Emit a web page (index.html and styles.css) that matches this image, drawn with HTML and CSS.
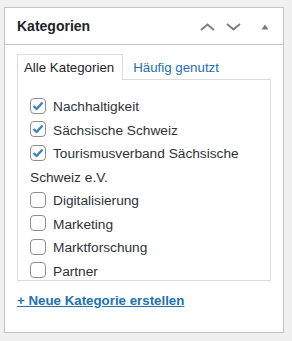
FILE: index.html
```html
<!DOCTYPE html>
<html lang="de">
<head>
    <meta charset="UTF-8">
    <meta name="viewport" content="width=device-width, initial-scale=1.0">
    <title>Kategorien</title>
    <link rel="stylesheet" href="styles.css">
</head>
<body>
    <div class="postbox">
        <div class="postbox-header">
            <h2>Kategorien</h2>
            <div class="handle-actions">
                <svg class="arrow" width="15" height="8" viewBox="0 0 15 8"><polyline points="1,7 7.5,1.5 14,7" fill="none" stroke="#787c82" stroke-width="1.8"/></svg>
                <svg class="arrow" width="15" height="8" viewBox="0 0 15 8"><polyline points="1,1 7.5,6.5 14,1" fill="none" stroke="#787c82" stroke-width="1.8"/></svg>
                <svg class="toggle" width="8" height="6" viewBox="0 0 8 6"><polygon points="0.5,5.5 4,0.5 7.5,5.5" fill="#787c82"/></svg>
            </div>
        </div>

        <div class="inside">
            <ul class="tabs">
                <li class="tab active">Alle Kategorien</li>
                <li class="tab"><a href="#">Häufig genutzt</a></li>
            </ul>

            <div class="tabs-panel">
                <ul class="checklist">
                    <li><label><span class="box checked"><svg width="12" height="10" viewBox="0 0 12 10"><polyline points="1.5,5 4.6,8 10.5,1.5" fill="none" stroke="#3582c4" stroke-width="2.3" stroke-linejoin="round"/></svg></span>Nachhaltigkeit</label></li>
                    <li><label><span class="box checked"><svg width="12" height="10" viewBox="0 0 12 10"><polyline points="1.5,5 4.6,8 10.5,1.5" fill="none" stroke="#3582c4" stroke-width="2.3" stroke-linejoin="round"/></svg></span>Sächsische Schweiz</label></li>
                    <li><label><span class="box checked"><svg width="12" height="10" viewBox="0 0 12 10"><polyline points="1.5,5 4.6,8 10.5,1.5" fill="none" stroke="#3582c4" stroke-width="2.3" stroke-linejoin="round"/></svg></span>Tourismusverband Sächsische Schweiz e.V.</label></li>
                    <li><label><span class="box"></span>Digitalisierung</label></li>
                    <li><label><span class="box"></span>Marketing</label></li>
                    <li><label><span class="box"></span>Marktforschung</label></li>
                    <li><label><span class="box"></span>Partner</label></li>
                </ul>
            </div>

            <a class="add-new" href="#">+ Neue Kategorie erstellen</a>
        </div>
    </div>
</body>
</html>
```

FILE: styles.css
```css
body {
    margin: 0;
    padding: 7px 8px 8px 4px;
    background-color: #f0f0f1;
    font-family: "Liberation Sans", Arial, sans-serif;
    color: #3c434a;
}

.postbox {
    width: 278px;
    height: 324px;
    background-color: #fff;
    border: 1px solid #c3c4c7;
}

.postbox-header {
    display: flex;
    align-items: center;
    justify-content: space-between;
    height: 36px;
    padding: 0 14px 0 12px;
    border-bottom: 1px solid #c3c4c7;
}

.postbox-header h2 {
    margin: 0;
    font-size: 14px;
    font-weight: bold;
    color: #1d2327;
}

.handle-actions {
    display: flex;
    align-items: center;
    padding-top: 1px;
}

.handle-actions .arrow {
    margin-left: 11px;
}

.handle-actions .toggle {
    margin-left: 20px;
}

.inside {
    padding: 9px 12px 0 12px;
}

.tabs {
    display: flex;
    margin: 0;
    padding: 0;
    list-style: none;
    font-size: 13.3px;
}

.tab {
    padding: 5px 8px 5px 6px;
    line-height: 15px;
    border: 1px solid transparent;
    border-bottom: none;
    margin-bottom: -1px;
}

.tab.active {
    border-color: #dcdcde;
    background-color: #fff;
    color: #1d2327;
    position: relative;
    z-index: 1;
}

.tab a {
    color: #2271b1;
    text-decoration: none;
    padding-left: 3px;
}

.tabs-panel {
    height: 200px;
    overflow: hidden;
    border: 1px solid #dcdcde;
    padding: 0 12px;
}

.checklist {
    margin: 0;
    padding: 15px 0 0 0;
    list-style: none;
    font-size: 13.7px;
    line-height: 23.5px;
    color: #2c3338;
}

.box {
    display: inline-flex;
    align-items: center;
    justify-content: center;
    box-sizing: border-box;
    width: 16px;
    height: 16px;
    margin: -3px 7px 0 0;
    vertical-align: middle;
    border: 1px solid #8c8f94;
    border-radius: 4px;
    background-color: #fff;
}

.add-new {
    display: inline-block;
    margin-top: 11px;
    font-size: 13.3px;
    font-weight: bold;
    line-height: 18px;
    color: #2271b1;
}
```
